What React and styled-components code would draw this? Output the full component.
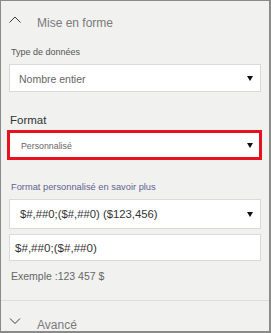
import React from "react";
import styled, { createGlobalStyle } from "styled-components";

const GlobalStyle = createGlobalStyle`
  html, body {
    margin: 0;
    padding: 0;
    background: #ffffff;
  }
  * {
    box-sizing: border-box;
  }
`;

const Panel = styled.div`
  width: 271px;
  height: 333px;
  overflow: hidden;
  background: #f1f1f0;
  border-style: solid;
  border-color: #8a8a8a;
  border-width: 1px 2px 2px 1px;
  font-family: "Liberation Sans", Arial, sans-serif;
`;

const Section = styled.section`
  border-bottom: ${(p) => (p.$divided ? "1px solid #dcdcdc" : "none")};
`;

const Header = styled.div`
  display: flex;
  align-items: flex-start;
  padding: ${(p) => p.$top}px 0 0 8px;
`;

const Chevron = styled.svg`
  width: 12px;
  height: 7px;
  flex-shrink: 0;
`;

const Title = styled.span`
  margin-left: 16px;
  font-size: 12px;
  line-height: 14px;
  color: #7a7a7a;
`;

const Body = styled.div`
  display: flex;
  flex-direction: column;
  padding: 16px 8px 17px 8px;
`;

const Label = styled.div`
  font-size: ${(p) => p.$size}px;
  line-height: ${(p) => p.$line}px;
  color: ${(p) => p.$color};
  margin-top: ${(p) => p.$mt || 0}px;
  padding-left: ${(p) => p.$indent || 2}px;
  white-space: nowrap;
`;

const Select = styled.div`
  display: flex;
  align-items: center;
  justify-content: space-between;
  height: ${(p) => p.$height}px;
  margin-top: ${(p) => p.$mt}px;
  margin-left: ${(p) => (p.$highlight ? -2 : 0)}px;
  margin-right: ${(p) => (p.$highlight ? -1 : 0)}px;
  padding: 0 ${(p) => p.$pr}px 0 ${(p) => p.$pl}px;
  background: #ffffff;
  border: ${(p) => (p.$highlight ? "3px solid #e8111f" : "1px solid #dadada")};
`;

const SelectText = styled.span`
  font-size: ${(p) => p.$size}px;
  color: ${(p) => p.$color};
  padding-top: ${(p) => p.$pt || 0}px;
  white-space: nowrap;
`;

const Caret = styled.svg`
  width: 6px;
  height: 5px;
  flex-shrink: 0;
`;

const Input = styled.div`
  display: flex;
  align-items: center;
  height: 27px;
  margin-top: 5px;
  padding-left: 5px;
  background: #ffffff;
  border: 1px solid #dadada;
  font-size: 11.6px;
  color: #333333;
`;

const ChevronUp = () => (
  <Chevron viewBox="0 0 12 7">
    <polyline points="0.5,6.5 6,1 11.5,6.5" fill="none" stroke="#3a3a4a" strokeWidth="1" />
  </Chevron>
);

const ChevronDown = () => (
  <Chevron viewBox="0 0 12 7">
    <polyline points="1,0.5 6,5.5 11,0.5" fill="none" stroke="#3a3a4a" strokeWidth="1" />
  </Chevron>
);

const DownCaret = () => (
  <Caret viewBox="0 0 6 5">
    <polygon points="0,0 6,0 3,5" fill="#111111" />
  </Caret>
);

const App = () => {
  return (
    <>
      <GlobalStyle />
      <Panel>
        <Section $divided>
          <Header $top={15}>
            <ChevronUp />
            <Title>Mise en forme</Title>
          </Header>
          <Body>
            <Label $size={9} $line={12} $color="#555555">
              Type de données
            </Label>
            <Select $height={28} $mt={6} $pl={9} $pr={7}>
              <SelectText $size={10.5} $color="#666666" $pt={1}>
                Nombre entier
              </SelectText>
              <DownCaret />
            </Select>
            <Label $size={11.5} $line={14} $color="#333333" $mt={21} $indent={1}>
              Format
            </Label>
            <Select $highlight $height={30} $mt={3} $pl={11} $pr={6}>
              <SelectText $size={8.8} $color="#666666" $pt={2}>
                Personnalisé
              </SelectText>
              <DownCaret />
            </Select>
            <Label $size={9.3} $line={12} $color="#62628e" $mt={21}>
              Format personnalisé en savoir plus
            </Label>
            <Select $height={30} $mt={6} $pl={10} $pr={7}>
              <SelectText $size={11.3} $color="#333333">
                $#,##0;($#,##0) ($123,456)
              </SelectText>
              <DownCaret />
            </Select>
            <Input>$#,##0;($#,##0)</Input>
            <Label $size={10.5} $line={13} $color="#666666" $mt={9}>
              Exemple :123 457 $
            </Label>
          </Body>
        </Section>
        <Section>
          <Header $top={17}>
            <ChevronDown />
            <Title>Avancé</Title>
          </Header>
        </Section>
      </Panel>
    </>
  );
};

export default App;
